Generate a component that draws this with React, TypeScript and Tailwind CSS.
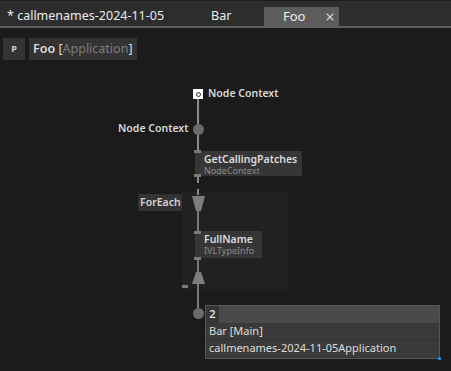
import { X } from "lucide-react";

const font = { fontFamily: '"Noto Sans", "Open Sans", sans-serif' };

function Pin({ x, y, w = 7 }: { x: number; y: number; w?: number }) {
  return <div className="absolute h-[3px] bg-[#7a7a7a]" style={{ left: x, top: y, width: w }} />;
}

function Node({ x, y, w, h, title, sub }: { x: number; y: number; w: number; h: number; title: string; sub: string }) {
  return (
    <div className="absolute bg-[#363636] pl-[9px] pt-[1px] flex flex-col" style={{ left: x, top: y, width: w, height: h }}>
      <div className="text-[10.5px] font-semibold text-[#dcdcdc] leading-[14px]">{title}</div>
      <div className="text-[9px] text-[#8a8a8a] leading-[10px]">{sub}</div>
    </div>
  );
}

export default function App() {
  return (
    <div className="w-[451px] h-[371px] bg-[#1b1b1b] overflow-hidden flex flex-col" style={font}>
      {/* tabs */}
      <div className="h-[28px] shrink-0 bg-[#2d2d2d] border-t border-[#1e1e1e] border-b-2 border-b-[#5e5e5e] flex items-end text-[12.5px] text-[#ececec]">
        <div className="h-[19px] flex items-center pl-[7px] w-[206px]">* callmenames-2024-11-05</div>
        <div className="h-[19px] flex items-center w-[58px] pl-[5px]">Bar</div>
        <div className="h-[19px] w-[75px] bg-[#5c5c5c] flex items-center pl-[19px] gap-[19px] text-[13px]">
          <span>Foo</span>
          <X size={12} strokeWidth={2.2} className="text-[#cfd6e0]" />
        </div>
      </div>

      {/* breadcrumb */}
      <div className="flex gap-[4px] pl-[3px] pt-[10px] shrink-0">
        <div className="w-[22px] h-[22px] bg-[#333] flex items-center justify-center text-[9px] font-bold text-[#cfcfcf]">P</div>
        <div className="h-[22px] w-[108px] bg-[#333] flex items-center pl-[4px] text-[12.5px] font-semibold text-[#dcdcdc]">
          Foo&nbsp;<span className="font-normal">[</span>
          <span className="font-normal text-[#7c7c7c]">Application</span>
          <span className="font-normal">]</span>
        </div>
      </div>

      {/* canvas */}
      <div className="relative flex-1 -mt-[32px]">
        {/* for each region */}
        <div className="absolute left-[182px] top-[164px] w-[106px] h-[97px] bg-[#212121]" />
        <div className="absolute left-[138px] top-[166px] w-[44px] h-[17px] bg-[#333] flex items-center pl-[2px] text-[10.5px] font-semibold text-[#d4d4d4]">ForEach</div>

        {/* wires */}
        <div className="absolute left-[197px] top-[70px] w-[2px] h-[53px] bg-[#8a8a8a]" />
        <div className="absolute left-[197px] top-[149px] w-0 h-[18px] border-l-2 border-dashed border-[#8a8a8a]" />
        <div className="absolute left-[197px] top-[182px] w-[2px] h-[22px] bg-[#7a7a7a]" />
        <div className="absolute left-[197px] top-[232px] w-[2px] h-[54px] bg-[#7a7a7a]" />

        {/* top IO box */}
        <div className="absolute left-[193px] top-[61px] w-[10px] h-[10px] bg-white flex items-center justify-center">
          <div className="w-[5px] h-[5px] rounded-full border border-[#333]" />
        </div>
        <div className="absolute left-[208px] top-[58px] text-[10.5px] font-semibold text-[#d8d8d8]">Node Context</div>

        {/* pad */}
        <div className="absolute left-[193px] top-[96px] w-[11px] h-[11px] rounded-full bg-[#6a6a6a]" />
        <div className="absolute left-[118px] top-[93px] text-[10.5px] font-semibold text-[#d8d8d8]">Node Context</div>

        <Node x={195} y={123} w={107} h={25} title="GetCallingPatches" sub="NodeContext" />
        <Pin x={194} y={122} />
        <Pin x={194} y={146} />

        {/* foreach top control point */}
        <svg className="absolute left-[192px] top-[168px]" width="13" height="15" viewBox="0 0 13 15">
          <polygon points="0,0 13,0 9,15 4,15" fill="#7d7d7d" />
        </svg>

        <Node x={195} y={203} w={67} h={27} title="FullName" sub="IVLTypeInfo" />
        <Pin x={194} y={203} />
        <Pin x={194} y={229} />

        <svg className="absolute left-[192px] top-[244px]" width="13" height="12" viewBox="0 0 13 12">
          <polygon points="4,0 9,0 13,12 0,12" fill="#7d7d7d" />
        </svg>
        <Pin x={182} y={257} w={6} />

        <div className="absolute left-[193px] top-[280px] w-[11px] h-[11px] rounded-full bg-[#6a6a6a]" />

        {/* tooltip */}
        <div className="absolute left-[205px] top-[277px] w-[235px] h-[54px] border border-[#555] bg-[#3a3a3a] flex flex-col text-[11px] text-[#dedede]">
          <div className="h-[17px] bg-[#4a4a4a] flex">
            <div className="w-[13px] h-full bg-[#363636] flex items-center justify-center font-semibold">2</div>
          </div>
          <div className="h-[17px] flex items-center pl-[3px] border-b border-[#323232]">Bar [Main]</div>
          <div className="h-[17px] flex items-center pl-[3px]">callmenames-2024-11-05Application</div>
          <div className="absolute right-[-2px] bottom-[-2px] w-[3px] h-[3px] bg-[#2a7fd0]" />
        </div>
      </div>
    </div>
  );
}
